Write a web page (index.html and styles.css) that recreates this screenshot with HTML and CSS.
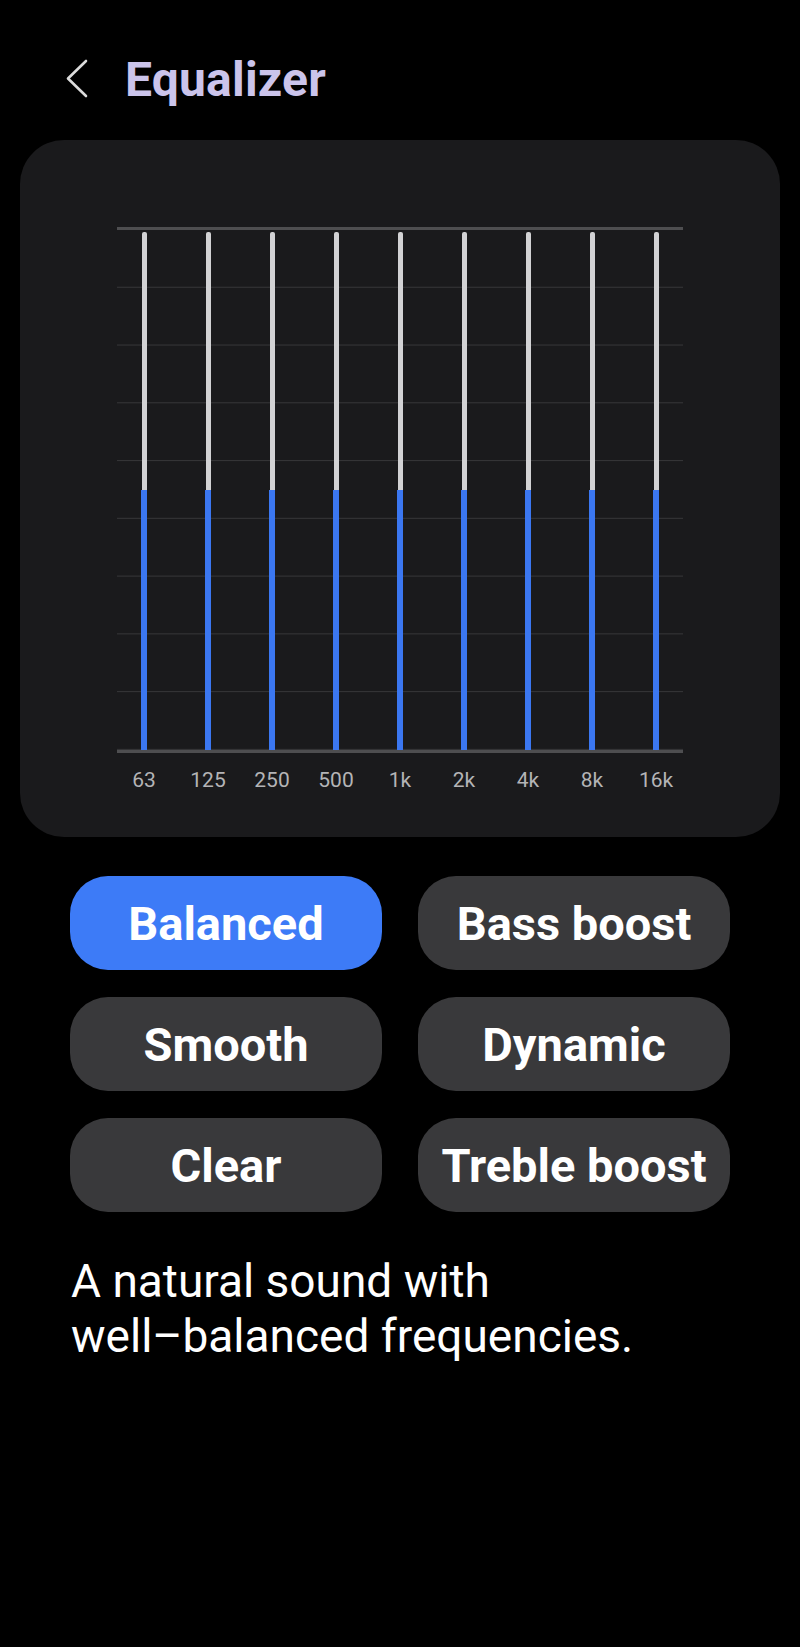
FILE: index.html
```html
<!DOCTYPE html>
<html lang="en">
<head>
<meta charset="utf-8">
<title>Equalizer</title>
<link rel="stylesheet" href="styles.css">
</head>
<body>
<div class="screen">
  <header class="header">
    <svg class="back" viewBox="0 0 24 40" width="24" height="40" aria-hidden="true">
      <path d="M21 3 L3 20.5 L21 38" fill="none" stroke="#dcdcdc" stroke-width="2.6" stroke-linecap="round" stroke-linejoin="round"/>
    </svg>
    <h1 class="title">Equalizer</h1>
  </header>

  <section class="card">
    <div class="chart">
      <div class="bars">
        <div class="band"><span class="track"></span><span class="fill"></span></div>
        <div class="band"><span class="track"></span><span class="fill"></span></div>
        <div class="band"><span class="track"></span><span class="fill"></span></div>
        <div class="band"><span class="track"></span><span class="fill"></span></div>
        <div class="band"><span class="track"></span><span class="fill"></span></div>
        <div class="band"><span class="track"></span><span class="fill"></span></div>
        <div class="band"><span class="track"></span><span class="fill"></span></div>
        <div class="band"><span class="track"></span><span class="fill"></span></div>
        <div class="band"><span class="track"></span><span class="fill"></span></div>
      </div>
    </div>
    <div class="labels">
      <span>63</span><span>125</span><span>250</span><span>500</span><span>1k</span><span>2k</span><span>4k</span><span>8k</span><span>16k</span>
    </div>
  </section>

  <div class="presets">
    <button class="preset active">Balanced</button>
    <button class="preset">Bass boost</button>
    <button class="preset">Smooth</button>
    <button class="preset">Dynamic</button>
    <button class="preset">Clear</button>
    <button class="preset">Treble boost</button>
  </div>

  <p class="desc">A natural sound with<br>well–balanced frequencies.</p>
</div>
</body>
</html>
```

FILE: styles.css
```css
html, body {
  margin: 0;
  padding: 0;
  background: #000;
}

body {
  font-family: Roboto, "Liberation Sans", sans-serif;
  color: #fff;
  width: 800px;
  min-height: 1647px;
}

.screen {
  display: flex;
  flex-direction: column;
}

.header {
  display: flex;
  align-items: flex-start;
  padding: 52px 0 0 65px;
  height: 56px;
}

.back {
  margin-top: 6px;
  flex: none;
}

.title {
  margin: 0 0 0 36px;
  font-size: 48px;
  line-height: 56px;
  font-weight: 700;
  color: #cbc4eb;
  letter-spacing: 0.2px;
}

.card {
  margin: 32px 20px 0 20px;
  background: #1a1a1c;
  border-radius: 44px;
  padding: 87px 0 45px 97px;
  display: flex;
  flex-direction: column;
}

.chart {
  width: 566px;
  height: 520px;
  border-top: 3px solid #4e4e50;
  border-bottom: 3px solid #4e4e50;
  background-image: linear-gradient(to bottom, #363638 0, #363638 1px, transparent 1px);
  background-size: 100% calc(100% / 9);
  background-position: 0 -1px;
}

.bars {
  display: grid;
  grid-template-columns: repeat(9, 1fr);
  margin: 0 -5px;
  height: 100%;
}

.band {
  display: flex;
  flex-direction: column;
  align-items: center;
  padding-top: 2px;
}

.track {
  width: 5px;
  height: 258px;
  background: #d2d2d4;
  border-radius: 2px 2px 0 0;
}

.fill {
  width: 6px;
  flex: 1;
  background: #3b77f1;
}

.labels {
  display: grid;
  grid-template-columns: repeat(9, 1fr);
  width: 576px;
  margin: 15px 0 0 -5px;
  font-size: 21px;
  line-height: 24px;
  color: #b4b4b6;
  text-align: center;
}

.presets {
  display: grid;
  grid-template-columns: 312px 312px;
  column-gap: 36px;
  row-gap: 27px;
  padding-left: 70px;
  margin-top: 39px;
}

.preset {
  height: 94px;
  border: none;
  border-radius: 38px;
  background: #39393b;
  color: #fff;
  font-family: Roboto, "Liberation Sans", sans-serif;
  font-size: 47px;
  font-weight: 700;
  padding: 0;
  display: flex;
  align-items: center;
  justify-content: center;
  letter-spacing: 0;
}

.preset.active {
  background: #3d7bf7;
}

.desc {
  margin: 42px 0 0 71px;
  font-size: 46px;
  line-height: 55px;
  font-weight: 400;
  color: #fff;
}
```
